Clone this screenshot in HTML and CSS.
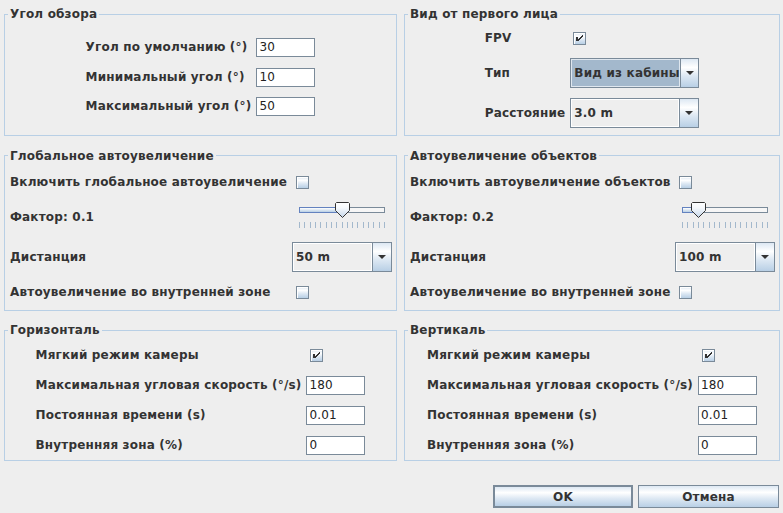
FILE: index.html
```html
<!DOCTYPE html>
<html lang="ru">
<head>
<meta charset="utf-8">
<title>Настройки камеры</title>
<link rel="stylesheet" href="styles.css">
</head>
<body>
<div class="dialog">
  <div class="panels">
    <fieldset class="group">
      <legend>Угол обзора</legend>
      <div class="form form-fov">
        <span class="lbl">Угол по умолчанию (°)</span><span class="field">30</span>
        <span class="lbl">Минимальный угол (°)</span><span class="field">10</span>
        <span class="lbl">Максимальный угол (°)</span><span class="field">50</span>
      </div>
    </fieldset>

    <fieldset class="group">
      <legend>Вид от первого лица</legend>
      <div class="form form-fpv">
        <span class="lbl lbl-top">FPV</span>
        <span class="check check-top"><svg viewBox="0 0 13 13" width="13" height="13"><path d="M3 5h2v4H3z M5 7h1v2H5z M6 6h1v2H6z M7 5h1v2H7z M8 4h1v2H8z M9 3h1v2H9z" fill="#333"/></svg></span>
        <span class="lbl">Тип</span>
        <div class="combo focused"><span class="combo-value">Вид из кабины</span><span class="combo-arrow"><svg viewBox="0 0 8 4" width="8" height="4"><polygon points="0,0 8,0 4,4" fill="#333"/></svg></span></div>
        <span class="lbl">Расстояние</span>
        <div class="combo"><span class="combo-value">3.0 m</span><span class="combo-arrow"><svg viewBox="0 0 8 4" width="8" height="4"><polygon points="0,0 8,0 4,4" fill="#333"/></svg></span></div>
      </div>
    </fieldset>

    <fieldset class="group">
      <legend>Глобальное автоувеличение</legend>
      <div class="form form-zoom">
        <span class="lbl">Включить глобальное автоувеличение</span>
        <span class="check"></span>
        <span class="lbl">Фактор: 0.1</span>
        <div class="slider">
          <div class="track"><span class="fill" style="width:44px"></span><span class="rest"></span></div>
          <div class="ticks"><i></i><i></i><i></i><i></i><i></i><i></i><i></i><i></i><i></i><i></i><i></i><i></i><i></i><i></i><i></i><i></i><i></i></div>
          <svg class="thumb" style="left:43px" viewBox="0 0 15 16" width="15" height="16"><defs><linearGradient id="tg1" x1="0" y1="0" x2="0" y2="1"><stop offset="0" stop-color="#ffffff"/><stop offset="0.35" stop-color="#f6f9fc"/><stop offset="1" stop-color="#c5d6e9"/></linearGradient></defs><path d="M1.5 0.5H13.5L14.5 1.5V8.5L7.5 15.5L0.5 8.5V1.5Z" fill="url(#tg1)" stroke="#333" stroke-width="1"/></svg>
        </div>
        <span class="lbl">Дистанция</span>
        <div class="combo"><span class="combo-value">50 m</span><span class="combo-arrow"><svg viewBox="0 0 8 4" width="8" height="4"><polygon points="0,0 8,0 4,4" fill="#333"/></svg></span></div>
        <span class="lbl">Автоувеличение во внутренней зоне</span>
        <span class="check"></span>
      </div>
    </fieldset>

    <fieldset class="group">
      <legend>Автоувеличение объектов</legend>
      <div class="form form-zoom">
        <span class="lbl">Включить автоувеличение объектов</span>
        <span class="check"></span>
        <span class="lbl">Фактор: 0.2</span>
        <div class="slider">
          <div class="track"><span class="fill" style="width:18px"></span><span class="rest"></span></div>
          <div class="ticks"><i></i><i></i><i></i><i></i><i></i><i></i><i></i><i></i><i></i><i></i><i></i><i></i><i></i><i></i><i></i><i></i><i></i></div>
          <svg class="thumb" style="left:16px" viewBox="0 0 15 16" width="15" height="16"><defs><linearGradient id="tg2" x1="0" y1="0" x2="0" y2="1"><stop offset="0" stop-color="#ffffff"/><stop offset="0.35" stop-color="#f6f9fc"/><stop offset="1" stop-color="#c5d6e9"/></linearGradient></defs><path d="M1.5 0.5H13.5L14.5 1.5V8.5L7.5 15.5L0.5 8.5V1.5Z" fill="url(#tg2)" stroke="#333" stroke-width="1"/></svg>
        </div>
        <span class="lbl">Дистанция</span>
        <div class="combo"><span class="combo-value">100 m</span><span class="combo-arrow"><svg viewBox="0 0 8 4" width="8" height="4"><polygon points="0,0 8,0 4,4" fill="#333"/></svg></span></div>
        <span class="lbl">Автоувеличение во внутренней зоне</span>
        <span class="check"></span>
      </div>
    </fieldset>

    <fieldset class="group">
      <legend>Горизонталь</legend>
      <div class="form form-smooth">
        <span class="lbl">Мягкий режим камеры</span>
        <span class="check"><svg viewBox="0 0 13 13" width="13" height="13"><path d="M3 5h2v4H3z M5 7h1v2H5z M6 6h1v2H6z M7 5h1v2H7z M8 4h1v2H8z M9 3h1v2H9z" fill="#333"/></svg></span>
        <span class="lbl">Максимальная угловая скорость (°/s)</span><span class="field">180</span>
        <span class="lbl">Постоянная времени (s)</span><span class="field">0.01</span>
        <span class="lbl">Внутренняя зона (%)</span><span class="field">0</span>
      </div>
    </fieldset>

    <fieldset class="group">
      <legend>Вертикаль</legend>
      <div class="form form-smooth">
        <span class="lbl">Мягкий режим камеры</span>
        <span class="check"><svg viewBox="0 0 13 13" width="13" height="13"><path d="M3 5h2v4H3z M5 7h1v2H5z M6 6h1v2H6z M7 5h1v2H7z M8 4h1v2H8z M9 3h1v2H9z" fill="#333"/></svg></span>
        <span class="lbl">Максимальная угловая скорость (°/s)</span><span class="field">180</span>
        <span class="lbl">Постоянная времени (s)</span><span class="field">0.01</span>
        <span class="lbl">Внутренняя зона (%)</span><span class="field">0</span>
      </div>
    </fieldset>
  </div>

  <div class="buttons">
    <button class="btn btn-default">OK</button>
    <button class="btn btn-cancel">Отмена</button>
  </div>
</div>
</body>
</html>
```

FILE: styles.css
```css
* { box-sizing: border-box; }

html, body { margin: 0; padding: 0; }

body {
  width: 783px;
  height: 513px;
  overflow: hidden;
  background: #eeeeee;
  font-family: "DejaVu Sans", "Liberation Sans", sans-serif;
  font-size: 12px;
  letter-spacing: 0.18px;
  color: #333333;
}

.dialog {
  padding: 7px 3px 0 4px;
}

.panels {
  display: grid;
  grid-template-columns: 393px 376px;
  grid-template-rows: 129px 162px 138px;
  column-gap: 7px;
  row-gap: 12.5px;
}

.group {
  margin: 0;
  padding: 0;
  min-width: 0;
  border: 1px solid #b8cfe5;
}

.group legend {
  margin-left: 3px;
  padding: 0 2px;
  font-weight: bold;
  line-height: 14px;
  white-space: nowrap;
}

.form {
  display: grid;
  align-items: center;
}

.lbl {
  font-weight: bold;
  line-height: 15px;
  white-space: nowrap;
}

/* text fields */
.field {
  display: block;
  height: 19px;
  padding: 0 2px;
  border: 1px solid #7a8a99;
  background: #ffffff;
  color: #222222;
  font-weight: normal;
  line-height: 17px;
  white-space: nowrap;
  overflow: hidden;
}

/* check boxes */
.check {
  display: block;
  width: 13px;
  height: 13px;
  border: 1px solid #7a8a99;
  background: linear-gradient(#dde8f3 0%, #ffffff 30%, #dde8f3 60%, #b8cfe5 100%);
  box-shadow: inset 1px 1px 0 #ffffff;
}

.check svg {
  display: block;
  margin: -1px;
}

/* combo boxes */
.combo {
  display: flex;
  height: 30px;
  border: 1px solid #7a8a99;
  background: #eeeeee;
}

.combo-value {
  flex: 1;
  padding-left: 3px;
  font-weight: bold;
  line-height: 28px;
  white-space: nowrap;
  box-shadow: inset 1px 1px 0 #ffffff, inset -1px -1px 0 #ffffff;
}

.combo.focused .combo-value {
  background: #a3b8cc;
  box-shadow: inset 1px 1px 0 #dfe7ef, inset -1px -1px 0 #dfe7ef;
}

.combo-arrow {
  width: 19px;
  display: flex;
  align-items: center;
  justify-content: center;
  border-left: 1px solid #7a8a99;
  background: linear-gradient(#dde8f3 0%, #ffffff 30%, #dde8f3 60%, #b8cfe5 100%);
}

.combo-arrow svg { display: block; }

/* panel 1 */
.form-fov {
  padding-top: 17px;
  grid-template-columns: auto 59px;
  grid-auto-rows: 19px;
  column-gap: 5px;
  row-gap: 10.5px;
  justify-content: center;
}

/* panel 2 */
.form-fpv {
  padding-top: 11px;
  grid-template-columns: auto 129px;
  grid-template-rows: 16px 30px 30px;
  column-gap: 5px;
  row-gap: 10px;
  justify-content: center;
}

.lbl-top {
  align-self: start;
  line-height: 13px;
}

.check-top {
  align-self: start;
  margin-left: 3px;
}

/* panels 3 & 4 */
.form-zoom {
  padding: 9.5px 4px 0 5px;
  grid-template-columns: 1fr 100px;
  grid-template-rows: 20px 30px 30px 20px;
  row-gap: 10px;
}

.form-zoom .check { margin-left: 4px; }

.slider {
  position: relative;
  height: 30px;
  padding: 0 7px;
}

.track {
  display: flex;
  height: 6px;
  margin-top: 5px;
}

.fill {
  display: block;
  border: 1px solid #6382bf;
  border-right: none;
  background: linear-gradient(#ffffff, #b8cfe5);
}

.rest {
  display: block;
  flex: 1;
  border: 1px solid #7a8a99;
  border-left: none;
  background: #f6f6f6;
}

.ticks {
  display: flex;
  justify-content: space-between;
  height: 6px;
  margin-top: 9px;
}

.ticks i {
  display: block;
  width: 1px;
  background: #a3b8cc;
}

.thumb {
  position: absolute;
  top: 0;
  display: block;
}

/* panels 5 & 6 */
.form-smooth {
  padding-top: 8px;
  grid-template-columns: auto 59px;
  grid-template-rows: 20px 19px 19px 19px;
  column-gap: 5px;
  row-gap: 11px;
  justify-content: center;
}

.form-smooth .check { margin-left: 4px; }

/* buttons */
.buttons {
  display: flex;
  justify-content: flex-end;
  gap: 5px;
  margin-top: 24px;
  padding-right: 1px;
}

.btn {
  height: 23px;
  padding: 0;
  border: 1px solid #7a8a99;
  background: linear-gradient(#dde8f3 0%, #ffffff 30%, #dde8f3 60%, #b8cfe5 100%);
  font-family: "DejaVu Sans", "Liberation Sans", sans-serif;
  font-size: 12px;
  font-weight: bold;
  letter-spacing: 0.18px;
  color: #333333;
}

.btn-default {
  width: 140px;
  border-width: 2px;
}

.btn-cancel {
  width: 141px;
}
```
